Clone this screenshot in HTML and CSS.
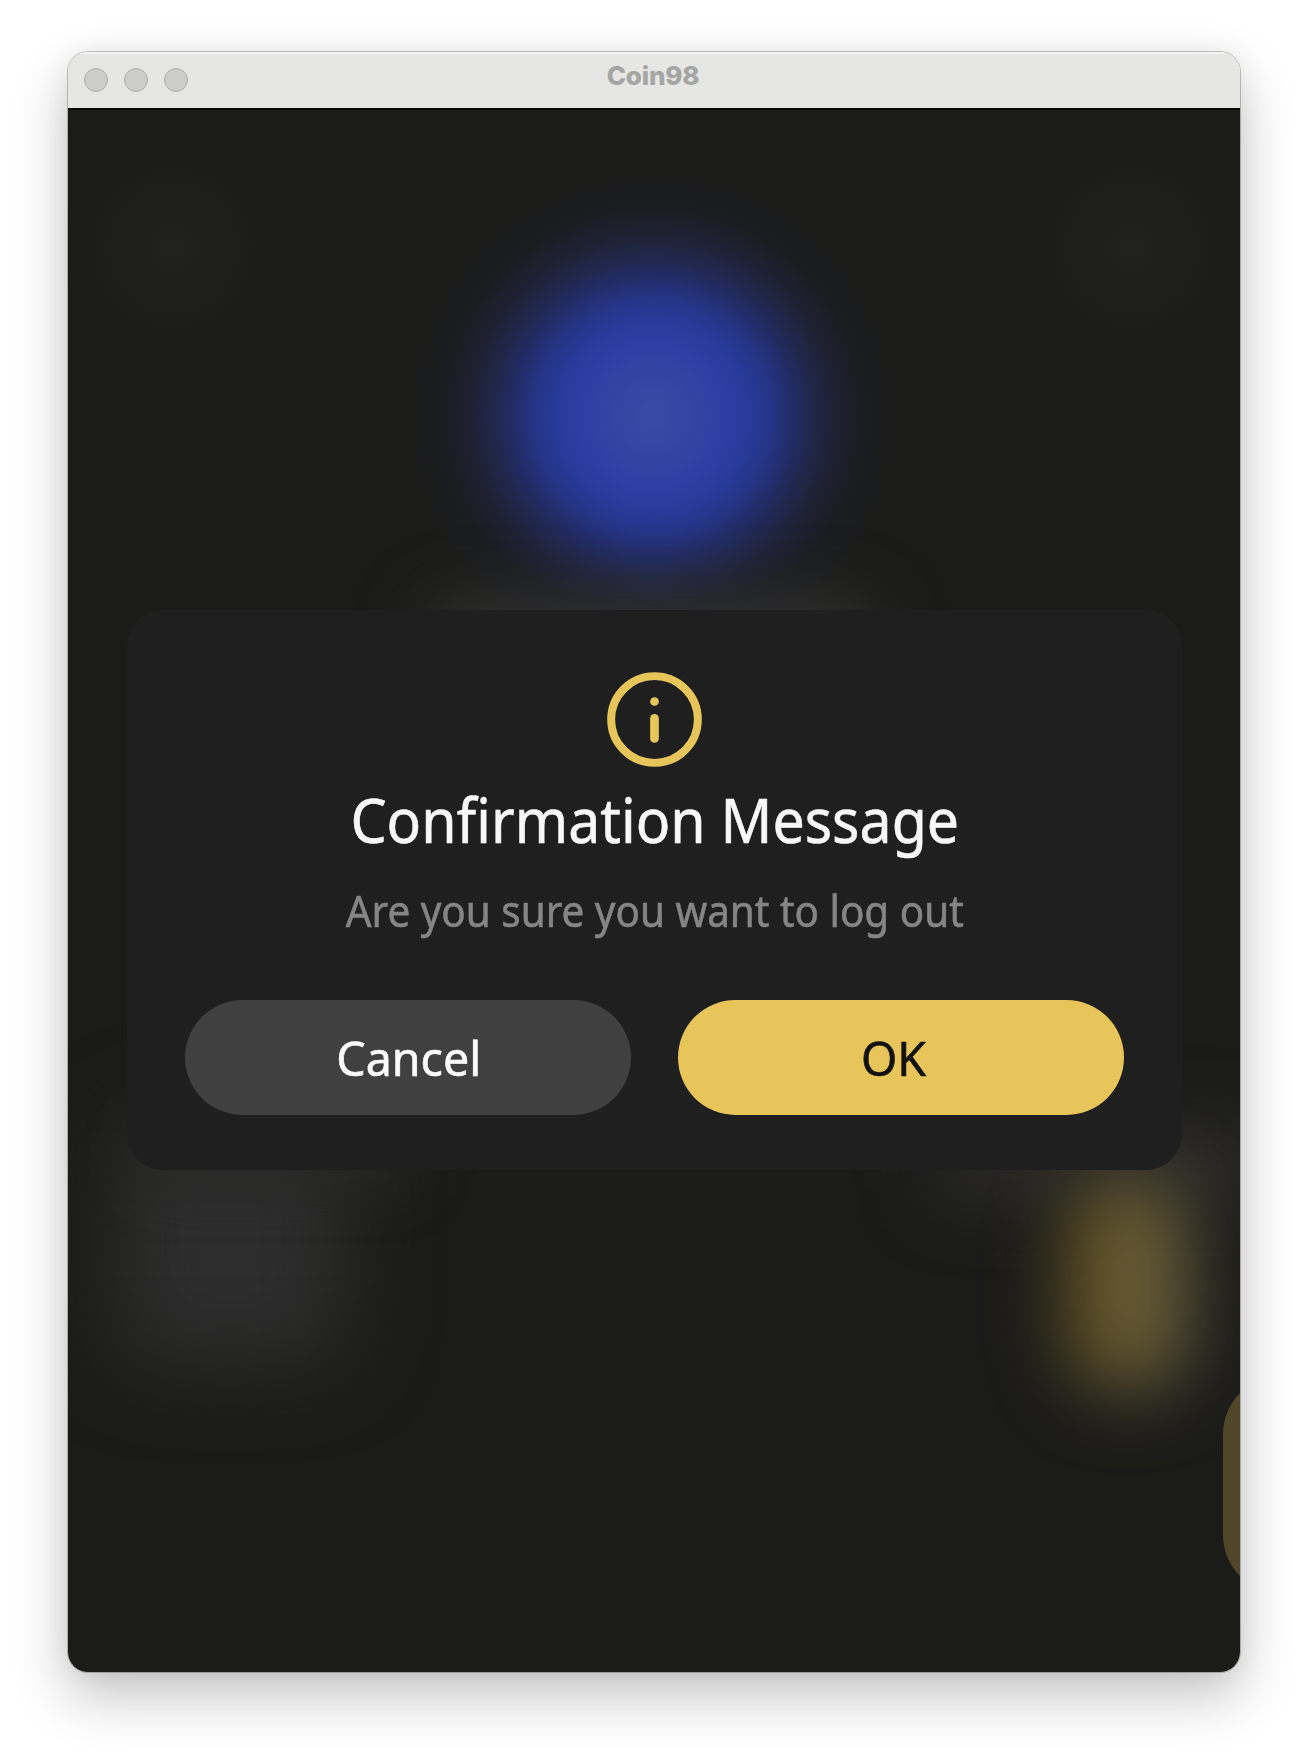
FILE: index.html
```html
<!DOCTYPE html>
<html lang="en">
<head>
<meta charset="utf-8">
<title>Coin98</title>
<link rel="stylesheet" href="styles.css">
</head>
<body>
<main class="window">
  <header class="titlebar">
    <div class="lights"><span class="light"></span><span class="light"></span><span class="light"></span></div>
    <h1 class="app-name"><span>Coin98</span></h1>
  </header>
  <section class="content">
    <div class="backdrop">
      <i class="glow blue"></i>
      <i class="glow logo-base"></i>
      <i class="glow corner-left"></i>
      <i class="glow corner-right"></i>
      <i class="glow gray-left"></i>
      <i class="glow gray-left-wide"></i>
      <i class="glow gray-right"></i>
      <i class="glow gold"></i>
      <i class="side-pill"></i>
    </div>
    <div class="dialog" role="dialog">
      <svg class="info" viewBox="0 0 96 96" width="95" height="95" fill="none" stroke="#e8c55b" stroke-linecap="round">
        <circle cx="48" cy="48" r="43.8" stroke-width="8"/>
        <circle cx="48" cy="29.8" r="4.4" fill="#e8c55b" stroke="none"/>
        <path d="M48 46.8v20.4" stroke-width="8.8"/>
      </svg>
      <h2 class="title"><span>Confirmation Message</span></h2>
      <p class="message"><span>Are you sure you want to log out</span></p>
      <div class="actions">
        <button class="btn cancel"><span>Cancel</span></button>
        <button class="btn ok"><span>OK</span></button>
      </div>
    </div>
  </section>
</main>
</body>
</html>
```
FILE: styles.css
```css
* { box-sizing: border-box; }
body {
  margin: 0;
  width: 1308px;
  height: 1756px;
  padding: 52px 68px 84px;
  background: #fff;
  font-family: "Noto Sans", "Open Sans", sans-serif;
  overflow: hidden;
}
.window {
  display: flex;
  flex-direction: column;
  height: 1620px;
  border-radius: 20px;
  overflow: hidden;
  box-shadow: 0 0 0 1px rgba(0, 0, 0, .22), 0 24px 56px rgba(0, 0, 0, .24), 0 0 26px rgba(0, 0, 0, .06);
}
.titlebar {
  display: grid;
  grid-template-columns: 1fr auto 1fr;
  align-items: start;
  height: 56px;
  padding: 0 18px 0 16px;
  background: #e6e6e4;
  box-shadow: inset 0 2px 0 #f3f3f2;
}
.lights { display: flex; gap: 16px; padding-top: 16px; }
.light {
  width: 24px;
  height: 24px;
  border: 1px solid #adadac;
  border-radius: 50%;
  background: #cdcdcb;
}
.app-name {
  margin: 0;
  padding-top: 8px;
  font: 800 26px/32px Inter, sans-serif;
  letter-spacing: -.2px;
  color: #a5a5a4;
}
.content {
  position: relative;
  flex: 1;
  padding: 502px 58px 0 59px;
  background: #1b1b19;
  box-shadow: inset 0 2px 0 #0a0a0a;
}
.backdrop { position: absolute; inset: 0; overflow: hidden; }
.glow { position: absolute; }
.blue {
  left: 330px;
  top: 53px;
  width: 510px;
  height: 510px;
  background: radial-gradient(closest-side, #3a4aa3 0, #3446a4 14%, #2d3fa2 28%, #283a9a 38%, #253484 47%, #222c66 55%, #20274a 63%, #1e2132 72%, #1c1d22 82%, #1b1b19 98%);
}
.logo-base {
  left: 355px;
  top: 492px;
  width: 455px;
  height: 90px;
  border-radius: 40px;
  background: #323232;
  filter: blur(32px);
}
.corner-left, .corner-right {
  top: 30px;
  width: 220px;
  height: 220px;
  background: radial-gradient(closest-side, #212120, rgba(31, 31, 30, 0));
}
.corner-left { left: -5px; }
.corner-right { left: 954px; }
.gray-left {
  left: 46px;
  top: 1010px;
  width: 232px;
  height: 246px;
  border-radius: 40px;
  background: #2d2d2d;
  filter: blur(42px);
}
.gray-left-wide {
  left: 80px;
  top: 1020px;
  width: 260px;
  height: 50px;
  background: #292928;
  filter: blur(28px);
}
.gray-right {
  left: 870px;
  top: 1025px;
  width: 330px;
  height: 60px;
  background: #302f2d;
  filter: blur(36px);
}
.gold {
  left: 996px;
  top: 1068px;
  width: 128px;
  height: 216px;
  border-radius: 60px;
  background: linear-gradient(90deg, #5e4d1d, #6d6038 60%, #5b553e);
  filter: blur(36px);
}
.side-pill {
  position: absolute;
  left: 1155px;
  top: 1268px;
  width: 300px;
  height: 217px;
  border-radius: 58px;
  background: #50462a;
}
.dialog {
  position: relative;
  display: flex;
  flex-direction: column;
  align-items: center;
  height: 560px;
  padding: 62px 58px 0;
  border-radius: 36px;
  background: #1f1f1f;
}
.info { display: block; }
.title, .message { margin: 0; font-weight: 400; white-space: nowrap; }
.title span, .message span, .btn span {
  display: inline-block;
  -webkit-text-stroke: .6px currentColor;
}
.title span { transform: scaleX(.923); }
.message span { transform: scaleX(.94); }
.title {
  margin-top: 7px;
  font-size: 62px;
  line-height: 90px;
  color: #f7f7f7;
}
.message {
  margin-top: 17px;
  font-size: 43px;
  line-height: 60px;
  color: #858585;
}
.actions {
  display: grid;
  grid-template-columns: 1fr 1fr;
  gap: 47px;
  width: 100%;
  margin-top: 59px;
}
.btn {
  height: 115px;
  padding: 0;
  border: 0;
  border-radius: 58px;
  font: 400 48px/60px "Noto Sans", "Open Sans", sans-serif;
}
.btn span { transform: scaleX(.97); }
.cancel { padding-left: 1px; background: #404040; color: #fafafa; }
.ok { padding-right: 14px; background: #e8c55b; color: #111; }
```
